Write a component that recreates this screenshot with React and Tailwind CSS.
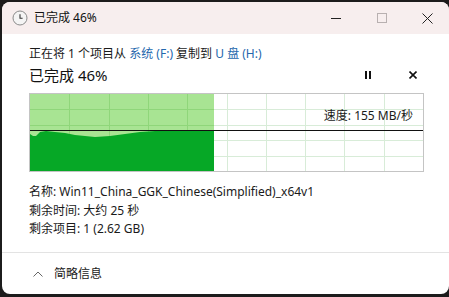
import React from "react";

const FONT = { fontFamily: '"Segoe UI", "Noto Sans", "Noto Sans CJK SC", sans-serif' };

// dark fill outline, chart-relative (x, y)
const WAVE = [
  [0, 40], [3, 42], [6, 42], [10, 38], [16, 37], [25, 38], [35, 39], [45, 41],
  [55, 42], [65, 43], [80, 42], [95, 40], [110, 38], [125, 37], [140, 37],
  [160, 37], [184, 37],
];

function Chart() {
  const W = 393;
  const H = 77;
  const fillW = 184;
  const cols = 10;
  const rows = 5;
  const area = `M0,${H} ` + WAVE.map(([x, y]) => `L${x},${y}`).join(" ") + ` L${fillW},${H} Z`;
  return (
    <div className="relative w-[395px] h-[79px] border border-[#c4c4c4] bg-white">
      <svg width={W} height={H} className="block">
        <rect x="0" y="0" width={fillW} height={H} fill="#a8e493" />
        {Array.from({ length: cols - 1 }).map((_, i) => {
          const x = Math.round(((i + 1) * W) / cols) + 0.5;
          return <line key={"v" + i} x1={x} y1="0" x2={x} y2={H} stroke={x < fillW ? "#8fd67a" : "#d8ecd8"} strokeWidth="1" />;
        })}
        {Array.from({ length: rows - 1 }).map((_, i) => {
          const y = Math.round(((i + 1) * H) / rows) + 0.5;
          return (
            <g key={"h" + i}>
              <line x1="0" y1={y} x2={fillW} y2={y} stroke="#8fd67a" strokeWidth="1" />
              <line x1={fillW} y1={y} x2={W} y2={y} stroke="#d8ecd8" strokeWidth="1" />
            </g>
          );
        })}
        <path d={area} fill="#06a826" />
        <line x1="0" y1="36.5" x2={W} y2="36.5" stroke="#111" strokeWidth="1" />
      </svg>
      <span className="absolute right-[10px] top-[16px] text-[12px] leading-none text-[#1a1a1a]">速度: 155 MB/秒</span>
    </div>
  );
}

export default function App() {
  return (
    <div className="w-[449px] h-[297px] bg-[#1c1c1c] pt-[2px] pl-[2px] pb-[3px]" style={FONT}>
      <div className="w-full h-full rounded-[8px] overflow-hidden bg-white flex flex-col">
        {/* title bar */}
        <div className="h-[32px] bg-[#f7eeee] flex items-center shrink-0">
          <svg width="16" height="16" viewBox="0 0 16 16" className="ml-[10px]">
            <circle cx="8" cy="8" r="7" fill="#f4f4f4" stroke="#8a8a8a" strokeWidth="1" />
            <path d="M8 4.2 V8.3 H10.6" fill="none" stroke="#333" strokeWidth="1.1" />
          </svg>
          <span className="ml-[6px] text-[12px] text-[#111]">已完成 46%</span>
          <div className="ml-auto flex items-center h-full">
            <div className="w-[46px] h-full flex items-center justify-center">
              <div className="w-[10px] h-px bg-[#222]" />
            </div>
            <div className="w-[46px] h-full flex items-center justify-center">
              <div className="w-[10px] h-[10px] border border-[#b8b0b0]" />
            </div>
            <div className="w-[44px] h-full flex items-center justify-center">
              <svg width="11" height="11" viewBox="0 0 11 11">
                <path d="M0.5 0.5 L10.5 10.5 M10.5 0.5 L0.5 10.5" stroke="#222" strokeWidth="1" />
              </svg>
            </div>
          </div>
        </div>

        {/* body */}
        <div className="pl-[27px] pt-[11px] flex flex-col">
          <div className="h-[18px] flex items-center text-[12px] text-[#1a1a1a]">
            正在将 1 个项目从&nbsp;<span className="text-[#2467ad]">系统 (F:)</span>&nbsp;复制到&nbsp;<span className="text-[#2467ad]">U 盘 (H:)</span>
          </div>
          <div className="h-[24px] flex items-center">
            <span className="text-[15px] text-[#111]">已完成 46%</span>
            <div className="ml-auto mr-[32px] flex items-center gap-[38px]">
              <div className="flex gap-[2px]">
                <div className="w-[2px] h-[8px] bg-[#111]" />
                <div className="w-[2px] h-[8px] bg-[#111]" />
              </div>
              <svg width="8" height="8" viewBox="0 0 8 8">
                <path d="M0.5 0.5 L7.5 7.5 M7.5 0.5 L0.5 7.5" stroke="#111" strokeWidth="1.6" />
              </svg>
            </div>
          </div>
          <div className="mt-[6px]">
            <Chart />
          </div>
          <div className="mt-[11px] flex flex-col text-[12px] text-[#1a1a1a] leading-[18.5px]">
            <span>名称: Win11_China_GGK_Chinese(Simplified)_x64v1</span>
            <span>剩余时间: 大约 25 秒</span>
            <span>剩余项目: 1 (2.62 GB)</span>
          </div>
        </div>

        <div className="mt-auto h-[42px] border-t border-[#e3e3e3] flex items-center pl-[31px] shrink-0">
          <svg width="10" height="6" viewBox="0 0 10 6">
            <path d="M0.5 5.5 L5 1 L9.5 5.5" fill="none" stroke="#666" strokeWidth="1" />
          </svg>
          <span className="ml-[11px] text-[12px] text-[#1a1a1a]">简略信息</span>
        </div>
      </div>
    </div>
  );
}
